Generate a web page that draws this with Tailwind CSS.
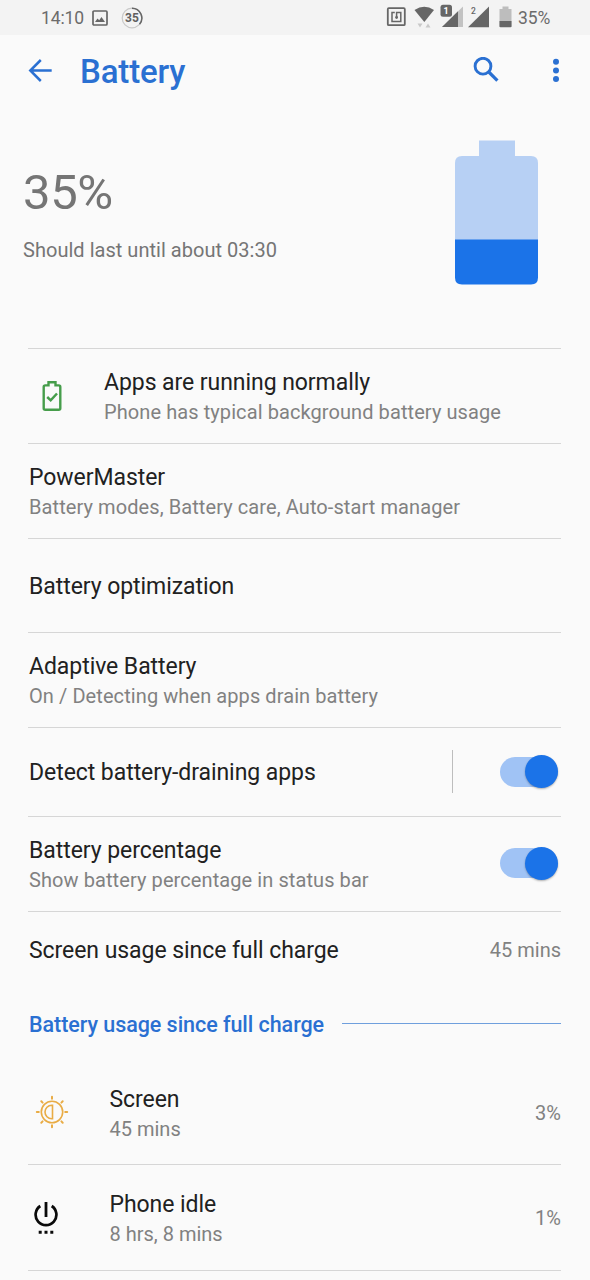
<!DOCTYPE html>
<html lang="en">
<head>
<meta charset="utf-8">
<title>Battery</title>
<script src="https://cdn.jsdelivr.net/npm/@tailwindcss/browser@4"></script>
</head>
<body class="w-[590px] h-[1280px] overflow-hidden bg-[#fafafa] font-['Roboto',sans-serif] text-[#212121]">
<div class="flex h-[35px] items-center bg-[#f3f3f3] pl-[41px] pr-[40px] pt-px text-[#6b6b6b]">
  <span class="w-[51px] text-[17.500px] leading-5 whitespace-nowrap tracking-[-0.1px]">14:10</span>
  <svg class="h-4 w-4" viewBox="0 0 16 16"><rect x="1" y="1" width="14" height="14" rx="1" fill="none" stroke="#666" stroke-width="1.7"/><path d="M3 12l2.5-3.5 1.7 1.8L9.5 7l3.5 5z" fill="#666"/></svg>
  <svg class="ml-[13px] h-[22px] w-[22px]" viewBox="0 0 22 22"><circle cx="11" cy="11" r="9.8" fill="none" stroke="#c8c8c8" stroke-width="1.2"/><path d="M11 1.2A9.8 9.8 0 0 1 18.5 17.3" fill="none" stroke="#666" stroke-width="1.5"/><text x="11" y="15.2" text-anchor="middle" font-family="Roboto" font-weight="700" font-size="12" fill="#606060">35</text></svg>
  <svg class="ml-auto h-[28px] w-[130px]" viewBox="0 0 130 28">
    <g transform="translate(0.8 -0.8)"><g fill="none" stroke="#666"><rect x="1" y="5" width="17" height="17" rx="1" stroke-width="1.8"/><path d="M8 9.2H5.2V18.2H14V9.2H9.8V14.5" stroke-width="1.5"/></g><circle cx="9.8" cy="14.3" r="1.4" fill="#666"/></g>
    <path d="M28.500 6Q38.300 -.5 48 6L38.300 18z" fill="#666"/><path d="M31.500 19.500h5l-2.500 4zM39.500 23.500h5l-2.500-4z" fill="#c9c9c9"/>
    <path d="M56 23L77 2.500V23z" fill="#c2c2c2"/><path d="M56 23L72 7.300V23z" fill="#666"/><rect x="54.500" y=".8" width="11.500" height="12" rx="2.500" fill="#666"/><text x="60.200" y="10.200" text-anchor="middle" font-family="Roboto" font-weight="700" font-size="9" fill="#fff">1</text>
    <path d="M82 23.300L103 2.500V23.300z" fill="#666"/><text x="85" y="9.500" font-family="Roboto" font-weight="500" font-size="8.500" fill="#666">2</text>
    <path d="M113.500 5h3V2.500h6V5h3v18h-12z" fill="#bdbdbd"/><path d="M113.500 17h12v5.300q0 1-1 1h-10q-1 0-1-1z" fill="#666"/>
  </svg>
  <span class="ml-[2px] w-[32px] text-[17.500px] leading-5 whitespace-nowrap tracking-[-0.1px]">35%</span>
</div>

<header class="flex h-[72px] items-center pl-[28px] pr-[30px]">
  <svg class="h-6 w-6" viewBox="0 0 24 24" fill="none" stroke="#2a70d2" stroke-width="2.500"><path d="M23.700 11.500H2.500M12.800 1L2.300 11.500l10.500 10.500"/></svg>
  <h1 class="ml-[28px] pt-[2px] text-[33px] font-medium leading-10 tracking-[-0.15px] text-[#2a70d2]">Battery</h1>
  <svg class="ml-auto h-[28px] w-[28px]" viewBox="0 0 28 28" fill="none" stroke="#2a70d2"><circle cx="11" cy="9.200" r="7.900" stroke-width="2.900"/><path d="M16.800 15l8.600 8.600" stroke-width="3.200"/></svg>
  <svg class="ml-[52px] h-[26px] w-[8px]" viewBox="0 0 8 26" fill="#2a70d2"><circle cx="4" cy="3.700" r="3"/><circle cx="4" cy="12.400" r="3"/><circle cx="4" cy="21" r="3"/></svg>
</header>

<section class="flex h-[241px] justify-between pl-[23px] pr-[52px]">
  <div class="pt-[57px]">
    <div class="text-[49px] leading-[58px] tracking-[-0.4px] text-[#757575]">35%</div>
    <div class="mt-[16px] text-[20px] leading-6 tracking-[0.030px] text-[#757575]">Should last until about 03:30</div>
  </div>
  <svg class="mt-[33px] h-[145px] w-[83px]" viewBox="0 0 83 145"><path d="M24 .500H60V16H76Q83 16 83 23V100H0V23Q0 16 7 16H24z" fill="#b7d0f4"/><path d="M0 99.500H83V137.500Q83 144.500 76 144.500H7Q0 144.500 0 137.500z" fill="#1b73e8"/></svg>
</section>

<main class="ml-[28px] mr-[29px] border-t border-[#d6d6d6]">
  <div class="flex h-[95px] border-b border-[#d6d6d6] pt-[19px]">
    <svg class="ml-[14px] mt-[12px] h-[32px] w-[20px]" viewBox="0 0 20 32" fill="none" stroke="#469d4b" stroke-width="2.400"><path d="M6.500 2.200h7v3.200h3.300q1.500 0 1.500 1.500V28.300q0 1.500-1.500 1.500H3.200q-1.500 0-1.500-1.500V6.900q0-1.500 1.500-1.500H6.500z"/><path d="M5.200 17l3.500 3.300 6.300-6.800" stroke-width="2.500"/></svg>
    <div class="ml-[42px] whitespace-nowrap">
      <div class="text-[23px] leading-[29px] tracking-[-0.06px]">Apps are running normally</div>
      <div class="mt-px text-[20px] leading-[29px] tracking-[0.085px] text-[#818181]">Phone has typical background battery usage</div>
    </div>
  </div>
  <div class="h-[95px] border-b border-[#d6d6d6] pt-[19px] pl-px">
    <div class="text-[23px] leading-[29px] tracking-[-0.06px]">PowerMaster</div>
    <div class="mt-px text-[20px] leading-[29px] tracking-[0.085px] text-[#818181]">Battery modes, Battery care, Auto-start manager</div>
  </div>
  <div class="flex h-[94px] items-center border-b border-[#d6d6d6] pl-px pt-[2px]">
    <div class="text-[23px] leading-[29px] tracking-[-0.06px]">Battery optimization</div>
  </div>
  <div class="h-[95px] border-b border-[#d6d6d6] pt-[19px] pl-px">
    <div class="text-[23px] leading-[29px] tracking-[-0.06px]">Adaptive Battery</div>
    <div class="mt-px text-[20px] leading-[29px] tracking-[0.085px] text-[#818181]">On / Detecting when apps drain battery</div>
  </div>
  <div class="flex h-[89px] items-center border-b border-[#d6d6d6] pl-px pr-[3px] pb-px">
    <div class="pt-[2px] text-[23px] leading-[29px] tracking-[-0.06px]">Detect battery-draining apps</div>
    <div class="ml-auto h-[43px] w-[1.500px] bg-[#bdbdbd]"></div>
    <div class="ml-[47px] flex h-[30px] w-[58px] items-center justify-end rounded-full bg-[#a0c3f5]"><div class="h-[33px] w-[33px] shrink-0 rounded-full bg-[#1b73e8] shadow-[0_1px_2px_rgba(0,0,0,0.3)]"></div></div>
  </div>
  <div class="flex h-[95px] border-b border-[#d6d6d6] pl-px pr-[3px]">
    <div class="pt-[19px]">
      <div class="text-[23px] leading-[29px] tracking-[-0.06px]">Battery percentage</div>
      <div class="mt-px text-[20px] leading-[29px] tracking-[0.085px] text-[#818181]">Show battery percentage in status bar</div>
    </div>
    <div class="ml-auto mt-[31px] flex h-[30px] w-[58px] items-center justify-end rounded-full bg-[#a0c3f5]"><div class="h-[33px] w-[33px] shrink-0 rounded-full bg-[#1b73e8] shadow-[0_1px_2px_rgba(0,0,0,0.3)]"></div></div>
  </div>
  <div class="flex h-[77px] items-center justify-between pl-px">
    <div class="text-[23px] leading-[29px] tracking-[-0.06px]">Screen usage since full charge</div>
    <div class="text-[20px] leading-[29px] text-[#818181]">45 mins</div>
  </div>
  <div class="flex h-[71px] items-center pl-px">
    <h2 class="whitespace-nowrap text-[21.500px] font-medium leading-[29px] tracking-[-0.050px] text-[#2a70d2]">Battery usage since full charge</h2>
    <div class="mb-[2px] ml-auto h-px w-[219px] bg-[#6f9fdd]"></div>
  </div>
  <div class="flex h-[105px] border-b border-[#d6d6d6] pt-[25px]">
    <svg class="ml-[7px] mt-[10px] h-[34px] w-[34px]" viewBox="0 0 34 34" fill="none" stroke="#e9ac45" stroke-width="2" stroke-linecap="round"><circle cx="17" cy="17" r="10.700" stroke-width="1.600"/><path d="M17.500 10.300v13.400h-.8a6.700 6.700 0 0 1 0-13.400z" stroke-width="1.600"/><path d="M17 1.800v2M17 30.200v2M1.800 17h2M30.200 17h2M6.300 6.300l1.300 1.300M26.400 26.400l1.300 1.300M6.300 27.700l1.300-1.300M26.400 7.600l1.300-1.300"/></svg>
    <div class="ml-[40.500px]">
      <div class="text-[23px] leading-[29px] tracking-[-0.06px]">Screen</div>
      <div class="mt-px text-[20px] leading-[29px] text-[#818181]">45 mins</div>
    </div>
    <div class="ml-auto mt-[14px] text-[20px] leading-[29px] text-[#818181]">3%</div>
  </div>
  <div class="flex h-[106px] border-b border-[#d6d6d6] pt-[25px]">
    <svg class="ml-[6px] mt-[11px] h-[34px] w-[24px]" viewBox="0 0 24 34" fill="none" stroke="#0a0a0a"><path d="M12 1v15" stroke-width="2.800"/><path d="M6.300 5A10.400 10.400 0 1 0 17.700 5" stroke-width="2.700"/><path d="M4.700 31.300h3M10.500 31.300h3M16.300 31.300h3" stroke-width="3"/></svg>
    <div class="ml-[51.500px]">
      <div class="text-[23px] leading-[29px] tracking-[-0.06px]">Phone idle</div>
      <div class="mt-px text-[20px] leading-[29px] text-[#818181]">8 hrs, 8 mins</div>
    </div>
    <div class="ml-auto mt-[14px] text-[20px] leading-[29px] text-[#818181]">1%</div>
  </div>
</main>
</body>
</html>
